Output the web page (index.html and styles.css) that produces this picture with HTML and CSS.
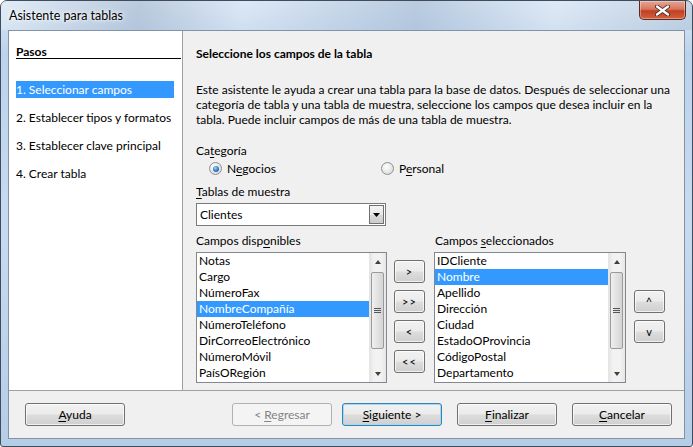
FILE: index.html
```html
<!DOCTYPE html>
<html lang="es">
<head>
    <meta charset="UTF-8">
    <title>Asistente para tablas</title>
    <link rel="stylesheet" href="styles.css">
</head>
<body>

<div class="window">
    <div class="titlebar">
        <span class="title">Asistente para tablas</span>
        <div class="close-btn">
            <svg width="15" height="11" viewBox="0 0 15 11">
                <path d="M2 1.5 L13 9.5 M13 1.5 L2 9.5" stroke="#3a2220" stroke-width="4" stroke-linecap="round"/>
                <path d="M2 1.5 L13 9.5 M13 1.5 L2 9.5" stroke="#fff" stroke-width="2.4" stroke-linecap="round"/>
            </svg>
        </div>
    </div>

    <div class="client">
        <div class="main">
            <!-- Steps pane -->
            <div class="steps">
                <div class="steps-title">Pasos</div>
                <div class="step active">1. Seleccionar campos</div>
                <div class="step">2. Establecer tipos y formatos</div>
                <div class="step">3. Establecer clave principal</div>
                <div class="step">4. Crear tabla</div>
            </div>

            <!-- Page content -->
            <div class="page">
                <div class="page-title">Seleccione los campos de la tabla</div>
                <p class="intro">Este asistente le ayuda a crear una tabla para la base de datos. Después de seleccionar una categoría de tabla y una tabla de muestra, seleccione los campos que desea incluir en la tabla. Puede incluir campos de más de una tabla de muestra.</p>

                <div class="label cat-label">Ca<u>t</u>egoría</div>
                <div class="radio-row">
                    <label class="radio radio-first"><span class="dot checked"></span><span>N<u>e</u>gocios</span></label>
                    <label class="radio"><span class="dot"></span><span>P<u>e</u>rsonal</span></label>
                </div>

                <div class="label tables-label"><u>T</u>ablas de muestra</div>
                <div class="combo">
                    <span class="combo-text">Clientes</span>
                    <span class="combo-btn">
                        <svg width="7" height="4" viewBox="0 0 7 4"><path d="M0 0 H7 L3.5 4 Z" fill="#000"/></svg>
                    </span>
                </div>

                <div class="fields">
                    <div class="label">Campos disp<u>o</u>nibles</div>
                    <div></div>
                    <div class="label">Campos <u>s</u>eleccionados</div>
                    <div></div>

                    <div class="listbox">
                        <ul class="items">
                            <li>Notas</li>
                            <li>Cargo</li>
                            <li>NúmeroFax</li>
                            <li class="sel">NombreCompañía</li>
                            <li>NúmeroTeléfono</li>
                            <li>DirCorreoElectrónico</li>
                            <li>NúmeroMóvil</li>
                            <li>PaísORegión</li>
                        </ul>
                        <div class="vscroll">
                            <span class="arrow up"></span>
                            <span class="thumb"><span class="grip"></span></span>
                            <span class="arrow down"></span>
                        </div>
                    </div>

                    <div class="move-btns">
                        <button class="btn small">&gt;</button>
                        <button class="btn small">&gt;&gt;</button>
                        <button class="btn small">&lt;</button>
                        <button class="btn small">&lt;&lt;</button>
                    </div>

                    <div class="listbox wide">
                        <ul class="items">
                            <li>IDCliente</li>
                            <li class="sel">Nombre</li>
                            <li>Apellido</li>
                            <li>Dirección</li>
                            <li>Ciudad</li>
                            <li>EstadoOProvincia</li>
                            <li>CódigoPostal</li>
                            <li>Departamento</li>
                        </ul>
                        <div class="vscroll">
                            <span class="arrow up"></span>
                            <span class="thumb"><span class="grip"></span></span>
                            <span class="arrow down"></span>
                        </div>
                    </div>

                    <div class="order-btns">
                        <button class="btn small">^</button>
                        <button class="btn small">v</button>
                    </div>
                </div>
            </div>
        </div>

        <div class="footer">
            <button class="btn"><u>A</u>yuda</button>
            <div class="nav">
                <button class="btn disabled">&lt; <u>R</u>egresar</button>
                <button class="btn default"><u>S</u>iguiente &gt;</button>
                <button class="btn"><u>F</u>inalizar</button>
                <button class="btn"><u>C</u>ancelar</button>
            </div>
        </div>
    </div>
</div>

</body>
</html>
```

FILE: styles.css
```css
body {
    margin: 0;
    font-family: Lato, "Open Sans", sans-serif;
    font-size: 12px;
    color: #000;
    background: #fff;
}
u {
    text-decoration: underline;
    text-underline-offset: 2px;
}
.window {
    width: 693px;
    height: 447px;
    box-sizing: border-box;
    border: 1px solid #3d4c5e;
    border-radius: 7px 7px 3px 3px;
    padding: 0 7px 7px 7px;
    background: linear-gradient(180deg, #dae6f4 0%, #bcd3ec 12%, #c7dbf0 50%, #b6cde6 100%);
    display: flex;
    flex-direction: column;
}
.titlebar {
    height: 29px;
    display: flex;
    align-items: flex-start;
    justify-content: space-between;
    background: linear-gradient(90deg, rgba(255,255,255,0.25) 0%, rgba(150,170,195,0.45) 20%, rgba(255,255,255,0.1) 35%, rgba(140,165,195,0.4) 60%, rgba(255,255,255,0.15) 80%, rgba(150,170,190,0.3) 100%);
    margin: 0 -7px;
    padding: 0 7px;
}
.title {
    margin: 7px 0 0 1px;
    font-size: 12.5px;
    text-shadow: 0 0 6px #fff, 0 0 3px #fff;
}
.close-btn {
    width: 45px;
    height: 18px;
    margin-right: -1px;
    border: 1px solid #5a2a22;
    border-top: none;
    border-radius: 0 0 5px 5px;
    background: linear-gradient(180deg, #e8a493 0%, #d7775f 45%, #c13f23 55%, #d4613f 100%);
    display: flex;
    align-items: center;
    justify-content: center;
    box-shadow: inset 0 0 0 1px rgba(255,255,255,0.35);
}
.client {
    flex: 1;
    display: flex;
    flex-direction: column;
    border: 1px solid #8293a8;
    background: #f0f0f0;
}
.main {
    height: 359px;
    display: flex;
}
.steps {
    width: 174px;
    box-sizing: border-box;
    background: #fff;
    border-right: 1px solid #a0a0a0;
    padding: 0 1px 0 7px;
}
.steps-title {
    margin-top: 14px;
    font-weight: bold;
    line-height: 13px;
    border-bottom: 1px solid #000;
}
.step {
    height: 17px;
    line-height: 17px;
    margin: 11px 7px 0 0;
    white-space: nowrap;
}
.steps-title + .step {
    margin-top: 22px;
}
.step.active {
    background: #3399ff;
    color: #fff;
}
.page {
    flex: 1;
    padding: 15px 8px 0 13px;
}
.page-title {
    font-weight: bold;
    line-height: 16px;
}
.intro {
    margin: 20px 0 0 0;
    line-height: 15px;
    width: 480px;
}
.label {
    line-height: 15px;
}
.cat-label {
    margin-top: 16px;
}
.radio-row {
    display: flex;
    margin-top: 3px;
    padding-left: 13px;
    line-height: 15px;
}
.radio {
    display: flex;
    align-items: center;
    gap: 5px;
}
.radio-first {
    width: 172px;
}
.dot {
    width: 11px;
    height: 11px;
    border: 1px solid #8d8f91;
    border-radius: 50%;
    background: radial-gradient(circle at 40% 35%, #ffffff 0%, #e6e6e6 55%, #cfd2d5 100%);
    display: flex;
    align-items: center;
    justify-content: center;
}
.dot.checked::after {
    content: "";
    width: 6px;
    height: 6px;
    border-radius: 50%;
    background: radial-gradient(circle at 40% 35%, #a9d8ff 0%, #3a86cc 45%, #194d85 100%);
}
.tables-label {
    margin-top: 8px;
}
.combo {
    width: 190px;
    height: 23px;
    box-sizing: border-box;
    margin-top: 4px;
    border: 1px solid #7a7a7a;
    background: #fff;
    display: flex;
    align-items: center;
    justify-content: space-between;
    padding: 0 1px 0 3px;
}
.combo-btn {
    width: 15px;
    height: 19px;
    box-sizing: border-box;
    border: 1px solid #707070;
    background: linear-gradient(180deg, #f4f4f4 0%, #e8e8e8 50%, #dadada 51%, #cdcdcd 100%);
    display: flex;
    align-items: center;
    justify-content: center;
}
.fields {
    margin-top: 7px;
    display: grid;
    grid-template-columns: 198px 40px 200px 31px;
}
.fields > .label:nth-child(3) {
    margin-left: 1px;
}
.fields .label {
    margin-bottom: 4px;
}
.listbox {
    width: 191px;
    height: 131px;
    box-sizing: border-box;
    border: 1px solid #828790;
    background: #fff;
    display: flex;
}
.listbox.wide {
    width: 192px;
}
.items {
    flex: 1;
    list-style: none;
    margin: 0;
    padding: 0;
    overflow: hidden;
}
.items li {
    height: 16px;
    line-height: 16px;
    padding-left: 2px;
    white-space: nowrap;
}
.items li.sel {
    background: #3399ff;
    color: #fff;
}
.vscroll {
    width: 17px;
    display: flex;
    flex-direction: column;
    align-items: center;
    background: linear-gradient(90deg, #e3e3e3 0%, #f2f2f2 30%, #f2f2f2 70%, #e6e6e6 100%);
}
.arrow {
    height: 17px;
    width: 17px;
    display: flex;
    align-items: center;
    justify-content: center;
}
.arrow::after {
    content: "";
    border-left: 3.5px solid transparent;
    border-right: 3.5px solid transparent;
}
.arrow.up::after {
    border-bottom: 4px solid #404040;
}
.arrow.down {
    margin-top: auto;
}
.arrow.down::after {
    border-top: 4px solid #404040;
}
.thumb {
    width: 13px;
    height: 77px;
    margin-top: 2px;
    box-sizing: border-box;
    border: 1px solid #9a9a9a;
    border-radius: 2px;
    background: linear-gradient(90deg, #f0f0f0 0%, #e2e2e2 50%, #d4d4d4 100%);
    display: flex;
    align-items: center;
    justify-content: center;
}
.grip {
    width: 7px;
    height: 5px;
    background: repeating-linear-gradient(180deg, #555 0 1px, transparent 1px 2px);
}
.move-btns,
.order-btns {
    display: flex;
    flex-direction: column;
    gap: 7px;
    padding-top: 8px;
}
.order-btns {
    padding-top: 38px;
}
.btn {
    height: 23px;
    width: 100px;
    box-sizing: border-box;
    border: 1px solid #707070;
    border-radius: 3px;
    background: linear-gradient(180deg, #f2f2f2 0%, #ebebeb 48%, #dddddd 52%, #cfcfcf 100%);
    box-shadow: inset 0 0 0 1px rgba(255,255,255,0.7);
    font-family: Lato, "Open Sans", sans-serif;
    font-size: 12px;
    color: #000;
    padding: 0;
}
.btn.small {
    width: 31px;
    font-size: 11px;
    letter-spacing: 1px;
}
.btn.disabled {
    border-color: #adb2b5;
    background: #f4f4f4;
    color: #838383;
    box-shadow: none;
}
.btn.default {
    border-color: #3c7fb1;
    box-shadow: inset 0 0 0 1px #9ddcf9;
}
.footer {
    flex: 1;
    border-top: 1px solid #a0a0a0;
    display: flex;
    align-items: flex-start;
    padding: 12px 12px 0 16px;
}
.nav {
    margin-left: auto;
    display: flex;
}
.nav .btn.default {
    margin-left: 10px;
}
.nav .btn.default ~ .btn {
    margin-left: 15px;
}
```
